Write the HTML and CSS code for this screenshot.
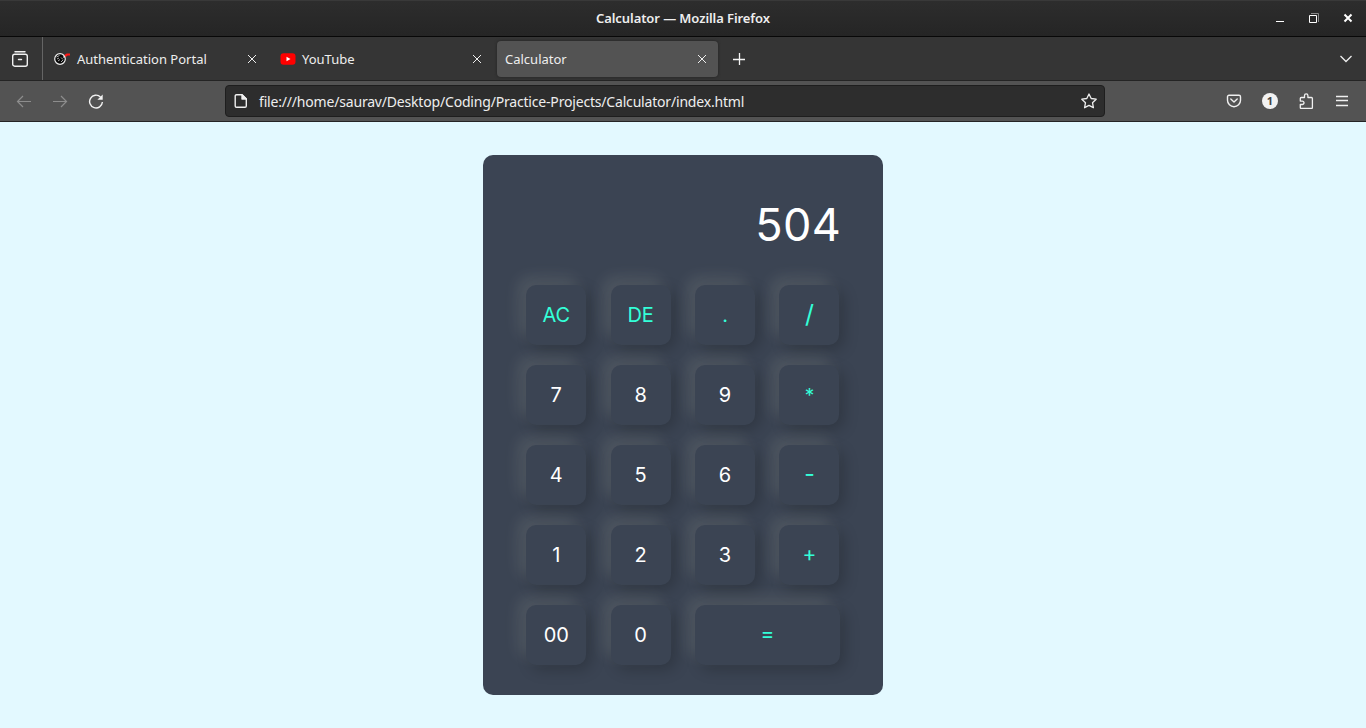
FILE: index.html
```html
<!DOCTYPE html>
<html lang="en">
<head>
<meta charset="utf-8">
<title>Calculator</title>
<link rel="stylesheet" href="styles.css">
</head>
<body>
<header class="titlebar">
  <span class="side"></span>
  <span class="window-title">Calculator — Mozilla Firefox</span>
  <div class="side window-controls">
    <svg width="12" height="14" viewBox="0 0 12 14"><path d="M2 10.500h8" stroke="#fff"/></svg>
    <svg width="12" height="14" viewBox="0 0 12 14" fill="none"><path d="M3 2.500h7.500V11" stroke="#888"/><path d="M1.500 4.500h7v7h-7z" stroke="#fff"/></svg>
    <svg width="12" height="14" viewBox="0 0 12 14"><path d="M2.500 3.500l7 7m0-7l-7 7" stroke="#fff" stroke-width="2"/></svg>
  </div>
</header>
<nav class="tabs">
  <div class="view-button"><svg width="18" height="18" viewBox="0 0 18 18" fill="none" stroke="#f0f0f0" stroke-width="1.400" stroke-linecap="round"><path d="M4 1.700h10M7.500 9.500h3"/><rect x="1.700" y="4.200" width="14.600" height="12" rx="2"/></svg></div>
  <div class="tab tab-first">
    <svg class="favicon" width="18" height="16" viewBox="0 0 18 16" fill="none"><circle cx="7" cy="8" r="5.300" fill="#080808" stroke="#eee" stroke-width="1.200"/><path d="M3.500 6l3-1.500M4 8l2-1M8 6.500l2 2M5 10l2-1.500M8 11l2-2" stroke="#aaa"/><path d="M10.500 6.500l2-2" stroke="#eee" stroke-width="1.500"/><path d="M12 5l2-1.500h3" stroke="#ff1818" stroke-width="2.200"/></svg>
    <span class="tab-label">Authentication Portal</span>
    <svg class="close" viewBox="0 0 10 10"><path d="M1 1l8 8m0-8l-8 8"/></svg>
  </div>
  <div class="tab tab-second">
    <svg class="favicon" width="16" height="16" viewBox="0 0 16 16"><rect x=".5" y="2.300" width="15" height="11.400" rx="3" fill="#f00"/><path d="M6.500 5.800v4.400l4-2.200z" fill="#fff"/></svg>
    <span class="tab-label">YouTube</span>
    <svg class="close" viewBox="0 0 10 10"><path d="M1 1l8 8m0-8l-8 8"/></svg>
  </div>
  <div class="tab tab-active">
    <span class="tab-label">Calculator</span>
    <svg class="close" viewBox="0 0 10 10"><path d="M1 1l8 8m0-8l-8 8"/></svg>
  </div>
  <svg class="new-tab" width="14" height="14" viewBox="0 0 14 14"><path d="M1 7.500h12M7.500 1v12" stroke="#f5f5f5" stroke-width="1.300"/></svg>
  <svg class="all-tabs" width="14" height="10" viewBox="0 0 14 10" fill="none"><path d="M1.500 2l5.500 5.500L12.500 2" stroke="#eee" stroke-width="1.300"/></svg>
</nav>
<div class="toolbar">
  <div class="navigation">
    <svg width="16" height="16" viewBox="0 0 16 16" class="muted"><path d="M15 8.500H1.500M7 3L1.500 8.500 7 14"/></svg>
    <svg width="16" height="16" viewBox="0 0 16 16" class="muted"><path d="M1 8.500h13.500M9 3l5.500 5.500L9 14"/></svg>
    <svg width="16" height="16" viewBox="0 0 16 16" fill="none" stroke="#f3f3f3" stroke-width="1.400"><path d="M12.500 4A6.400 6.400 0 1 0 14.400 9"/><path d="M14.700 1.500v5.300H9.400z" fill="#f3f3f3" stroke="none"/></svg>
  </div>
  <div class="address">
    <svg width="14" height="16" viewBox="0 0 14 16" fill="none" stroke="#f0f0f0" stroke-width="1.400" stroke-linejoin="round"><path d="M2.500 1.700H8L12.300 6v7a1.300 1.300 0 0 1-1.300 1.300H2.500A1.300 1.300 0 0 1 1.200 13V3a1.300 1.300 0 0 1 1.300-1.300z"/><path d="M8 1.700V6h4.300z" fill="#f0f0f0"/></svg>
    <span class="url">file:///home/saurav/Desktop/Coding/Practice-Projects/Calculator/index.html</span>
    <svg width="16" height="16" viewBox="0 0 16 16" fill="none" stroke="#eee" stroke-width="1.300" stroke-linejoin="round"><path d="M8 1l2.200 4.500 5 .7-3.700 3.500.9 5L8 12.400l-4.400 2.300.9-5L.8 6.200l5-.7z"/></svg>
  </div>
  <div class="actions">
    <svg width="16" height="16" viewBox="0 0 16 16" fill="none" stroke="#f0f0f0" stroke-width="1.400" stroke-linecap="round" stroke-linejoin="round"><path d="M3 2.200h10a1.500 1.500 0 0 1 1.500 1.500v3.500a6.500 6.500 0 0 1-13 0V3.700A1.500 1.500 0 0 1 3 2.200z"/><path d="M4.800 6L8 9l3.200-3"/></svg>
    <span class="account">1</span>
    <svg width="16" height="16" viewBox="0 0 16 16" fill="none" stroke="#f0f0f0" stroke-width="1.300" stroke-linejoin="round"><path d="M3.300 4.500h3.200V2.600a1.700 1.700 0 0 1 3.400 0v1.900h3.500a1 1 0 0 1 1 1v9a1 1 0 0 1-1 1H3.300a1 1 0 0 1-1-1v-3h2a1.700 1.700 0 0 0 0-3.400h-2V5.500a1 1 0 0 1 1-1z"/></svg>
    <svg width="16" height="16" viewBox="0 0 16 16"><path d="M2 3.500h12M2 7.500h12M2 12.500h12" stroke="#f0f0f0" stroke-width="1.300"/></svg>
  </div>
</div>
<main class="page">
  <section class="calculator">
    <output class="display">504</output>
    <div class="keys">
      <button class="operator">AC</button><button class="operator">DE</button><button class="operator">.</button><button class="operator slash">/</button>
      <button>7</button><button>8</button><button>9</button><button class="operator star">*</button>
      <button>4</button><button>5</button><button>6</button><button class="operator minus">-</button>
      <button>1</button><button>2</button><button>3</button><button class="operator plus">+</button>
      <button>00</button><button>0</button><button class="operator equals">=</button>
    </div>
  </section>
</main>
</body>
</html>
```
FILE: styles.css
```css
* { box-sizing: border-box; }
body { margin: 0; width: 1366px; height: 728px; overflow: hidden; background: #e3f9ff; font-family: "Noto Sans", sans-serif; color: #eee; }
svg { display: block; flex-shrink: 0; }
.titlebar { height: 37px; display: flex; align-items: center; padding: 0 12px 1px; background: linear-gradient(#2d2d2d, #252525); border-top: 1px solid #393939; border-bottom: 1px solid #080808; }
.side { flex: 1; }
.window-title { font: 600 13px "Noto Sans", sans-serif; letter-spacing: -.08px; }
.window-controls { display: flex; justify-content: flex-end; gap: 22px; }
.tabs { height: 44px; display: flex; align-items: center; background: #353535; border-bottom: 1px solid #242424; }
.view-button { width: 43px; height: 43px; padding: 13px 11px; border-right: 1px solid #656565; }
.tab { height: 36px; display: flex; align-items: center; font-size: 13px; }
.tab-first { width: 229px; padding: 0 15px 0 10px; }
.tab-second { width: 225px; padding: 0 15px 0 8px; }
.tab-active { width: 221px; background: #535353; border-radius: 4px; padding: 0 11px 0 8px; box-shadow: 0 0 3px #222; }
.favicon { margin-right: 6px; }
.tab-label { flex: 1; white-space: nowrap; }
.close { width: 10px; height: 10px; fill: none; stroke: #eee; stroke-width: 1; }
.new-tab { margin-left: 14px; }
.all-tabs { margin-left: auto; margin-right: 13px; }
.toolbar { height: 41px; display: flex; align-items: center; background: #535353; border-bottom: 1px solid #242424; }
.navigation { width: 225px; padding-left: 16px; display: flex; gap: 20px; }
.muted { fill: none; stroke: #8d8d8d; stroke-width: 1.2; }
.address { width: 880px; height: 32px; display: flex; align-items: center; padding: 0 7px 0 8px; border: 1px solid #1e1e1e; border-radius: 4px; background: #2d2d2d; }
.url { flex: 1; margin-left: 11px; font-size: 14px; white-space: nowrap; letter-spacing: -.185px; }
.actions { flex: 1; display: flex; justify-content: flex-end; gap: 20px; padding-right: 16px; }
.account { width: 16px; height: 16px; border-radius: 50%; background: #f2f2f2; color: #444; font: bold 11px/16px "Noto Sans", sans-serif; text-align: center; }
.page { padding-top: 33px; display: flex; justify-content: center; }
.calculator { width: 400px; height: 540px; padding: 30px 42px 30px 43.25px; background: #3b4453; border-radius: 10px; font-family: Inter, sans-serif; }
.display { display: block; height: 100px; padding-top: 12px; text-align: right; color: #fff; font-size: 45px; font-weight: 400; line-height: 55px; letter-spacing: .3px; }
.keys { display: grid; grid-template-columns: repeat(4, 60px); grid-auto-rows: 60px; column-gap: 24.4px; row-gap: 20px; }
.keys button { padding: 0; border: 0; border-radius: 10px; background: #3b4453; color: #fff; font: 400 20px Inter, sans-serif; box-shadow: -8px -8px 15px rgba(255,255,230,.1), 5px 5px 15px rgba(0,0,0,.2); }
.keys .operator { color: #33ffd8; }
.keys .slash { font-size: 25px; padding-bottom: 2px; }
.keys .star { font-size: 19px; }
.keys .minus { font-size: 23px; padding-bottom: 2px; }
.keys .plus, .keys .equals { font-size: 21px; padding-bottom: 4px; }
.keys .equals { grid-column: 3 / 5; width: 145px; }
```
